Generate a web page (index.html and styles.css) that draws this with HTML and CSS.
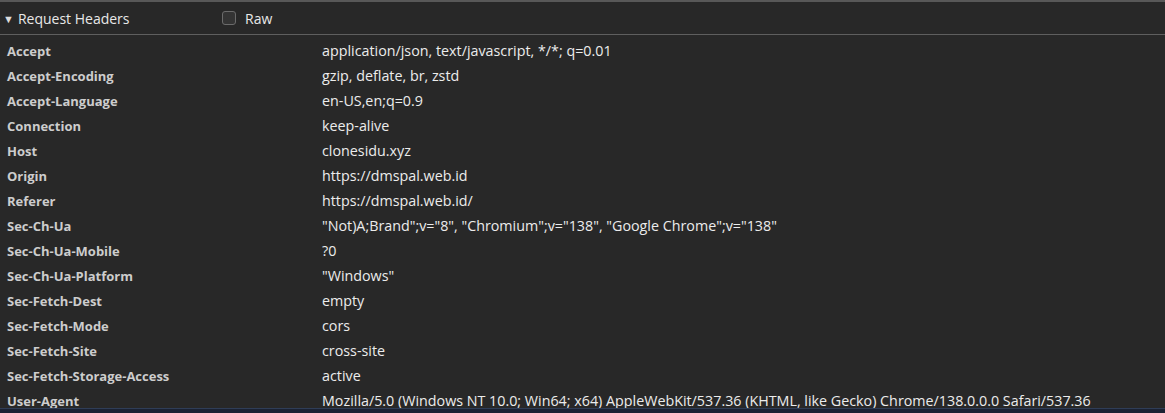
FILE: index.html
```html
<!DOCTYPE html>
<html>
<head>
<meta charset="utf-8">
<link rel="stylesheet" href="styles.css">
</head>
<body>
<div class="panel">
  <div class="header">
    <div class="title"><span class="tri">&#9660;</span><span>Request Headers</span></div>
    <label class="raw"><span class="cb"></span><span>Raw</span></label>
  </div>
  <div class="rows">
    <div class="row"><div class="k">Accept</div><div class="v">application/json, text/javascript, */*; q=0.01</div></div>
    <div class="row"><div class="k">Accept-Encoding</div><div class="v">gzip, deflate, br, zstd</div></div>
    <div class="row"><div class="k">Accept-Language</div><div class="v">en-US,en;q=0.9</div></div>
    <div class="row"><div class="k">Connection</div><div class="v">keep-alive</div></div>
    <div class="row"><div class="k">Host</div><div class="v">clonesidu.xyz</div></div>
    <div class="row"><div class="k">Origin</div><div class="v">https://dmspal.web.id</div></div>
    <div class="row"><div class="k">Referer</div><div class="v">https://dmspal.web.id/</div></div>
    <div class="row"><div class="k">Sec-Ch-Ua</div><div class="v">"Not)A;Brand";v="8", "Chromium";v="138", "Google Chrome";v="138"</div></div>
    <div class="row"><div class="k">Sec-Ch-Ua-Mobile</div><div class="v">?0</div></div>
    <div class="row"><div class="k">Sec-Ch-Ua-Platform</div><div class="v">"Windows"</div></div>
    <div class="row"><div class="k">Sec-Fetch-Dest</div><div class="v">empty</div></div>
    <div class="row"><div class="k">Sec-Fetch-Mode</div><div class="v">cors</div></div>
    <div class="row"><div class="k">Sec-Fetch-Site</div><div class="v">cross-site</div></div>
    <div class="row"><div class="k">Sec-Fetch-Storage-Access</div><div class="v">active</div></div>
    <div class="row"><div class="k">User-Agent</div><div class="v">Mozilla/5.0 (Windows NT 10.0; Win64; x64) AppleWebKit/537.36 (KHTML, like Gecko) Chrome/138.0.0.0 Safari/537.36</div></div>
  </div>
</div>
<div class="bottom"></div>
</body>
</html>
```
FILE: styles.css
```css
html, body {
  margin: 0;
  padding: 0;
  background: #282828;
  height: 413px;
  overflow: hidden;
}
body {
  font-family: "Open Sans", "Noto Sans", sans-serif;
  color: #e4e4e4;
  display: flex;
  flex-direction: column;
}
.panel {
  border-top: 2px solid #585858;
  height: 406px;
  overflow: hidden;
}
.header {
  height: 32px;
  border-bottom: 1px solid #5f5f5f;
  display: flex;
  align-items: center;
}
.title {
  width: 222px;
  display: flex;
  align-items: center;
  font-size: 14px;
  color: #e8e8e8;
}
.tri {
  font-size: 11px;
  margin-left: 3px;
  margin-right: 4px;
  color: #dcdcdc;
}
.raw {
  display: flex;
  align-items: center;
  font-size: 14px;
  color: #e8e8e8;
}
.cb {
  width: 12px;
  height: 12px;
  border: 1px solid #6b6b6b;
  border-radius: 3px;
  background: #343434;
  margin-right: 9px;
}
.rows {
  padding-top: 3px;
}
.row {
  height: 25px;
  display: flex;
  align-items: center;
}
.k {
  width: 315px;
  padding-left: 7px;
  font-size: 13px;
  font-weight: 700;
  color: #cdcdcd;
}
.v {
  white-space: nowrap;
  font-size: 14.3px;
  color: #ececec;
}
.bottom {
  flex: 1;
  background: #1b2233;
  border-top: 1px solid #2f3d57;
}
```
